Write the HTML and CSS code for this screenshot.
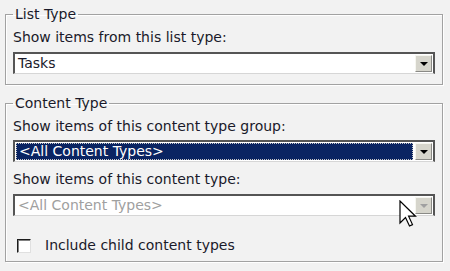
FILE: index.html
```html
<!DOCTYPE html>
<html>
<head>
<meta charset="utf-8">
<link rel="stylesheet" href="styles.css">
</head>
<body>
<div class="page">
  <fieldset class="group first">
    <legend>List Type</legend>
    <div class="label">Show items from this list type:</div>
    <div class="select">
      <span class="value">Tasks</span>
      <span class="btn"><span class="tri"></span></span>
    </div>
  </fieldset>
  <fieldset class="group second">
    <legend>Content Type</legend>
    <div class="label">Show items of this content type group:</div>
    <div class="select selected">
      <span class="value"><span class="focus">&lt;All Content Types&gt;</span></span>
      <span class="btn"><span class="tri"></span></span>
    </div>
    <div class="label later">Show items of this content type:</div>
    <div class="select disabled">
      <span class="value">&lt;All Content Types&gt;</span>
      <span class="btn"><span class="tri"></span></span>
      <svg class="cursor" width="18" height="28" viewBox="0 0 18 28"><polygon points="1,1 1,23 6.5,17.5 10.5,26 13.5,24.6 9.6,16.2 16.5,16.2" fill="#fff" stroke="#000" stroke-width="1.2" stroke-linejoin="miter"/></svg>
    </div>
    <label class="check"><span class="box"></span>Include child content types</label>
  </fieldset>
</div>
</body>
</html>
```
FILE: styles.css
```css
html, body {
  margin: 0;
  padding: 0;
  background: #f2f2f2;
}
body {
  font-family: "DejaVu Sans", Verdana, sans-serif;
  font-size: 14px;
  color: #1a1a2a;
  width: 450px;
  height: 271px;
  overflow: hidden;
}
.page {
  padding: 6px 0 0 5px;
}
.group {
  width: 422px;
  margin: 0;
  padding: 0 7px 10px 7px;
  border: 1px solid #a2a2a2;
  box-shadow: inset 1px 1px 0 #fff, 1px 1px 0 #fff;
}
.second {
  margin-top: 10px;
  padding-bottom: 7px;
}
legend {
  padding: 0 2px;
  margin-left: 0;
  line-height: 16px;
}
.label {
  line-height: 17px;
  margin-top: 7px;
  margin-bottom: 6px;
  white-space: nowrap;
}
.second .label {
  margin-bottom: 5px;
}
.second .label.later {
  margin-top: 9px;
  margin-bottom: 6px;
}
.select {
  position: relative;
  display: flex;
  align-items: center;
  height: 19px;
  background: #fff;
  border: 2px solid #555555;
  border-bottom: 1px solid #d6d6d6;
  box-sizing: content-box;
}
.value {
  flex: 1;
  padding-left: 3px;
  line-height: 17px;
  margin-right: 2px;
  white-space: nowrap;
}
.selected .value {
  background: #0a2462;
  color: #fff;
  align-self: stretch;
  margin: 1px 2px 1px 1px;
  padding-left: 0;
  display: flex;
}
.focus {
  flex: 1;
  border: 1px dotted #c8c8c8;
  padding-left: 2px;
  line-height: 15px;
}
.btn {
  width: 15px;
  height: 15px;
  margin-right: 1px;
  background: #d6d5cc;
  border-top: 1px solid #f6f6f0;
  border-left: 1px solid #f6f6f0;
  border-right: 1px solid #8a8a86;
  border-bottom: 1px solid #8a8a86;
  display: flex;
  align-items: center;
  justify-content: center;
}
.tri {
  width: 0;
  height: 0;
  border-left: 4px solid transparent;
  border-right: 4px solid transparent;
  border-top: 4px solid #000;
  margin-top: 1px;
}
.disabled .value {
  color: #a0a0a0;
}
.disabled .tri {
  border-top-color: #a0a0a0;
}
.cursor {
  position: absolute;
  left: 384px;
  top: 4px;
}
.check {
  display: flex;
  align-items: center;
  margin-top: 21px;
  margin-left: 4px;
  line-height: 17px;
}
.box {
  width: 12px;
  height: 12px;
  background: #fff;
  border: 1px solid #1c1c1c;
  border-right-color: #e0e0e0;
  border-bottom-color: #e0e0e0;
  box-shadow: inset 1px 1px 0 #808080;
  margin-right: 14px;
}
```
